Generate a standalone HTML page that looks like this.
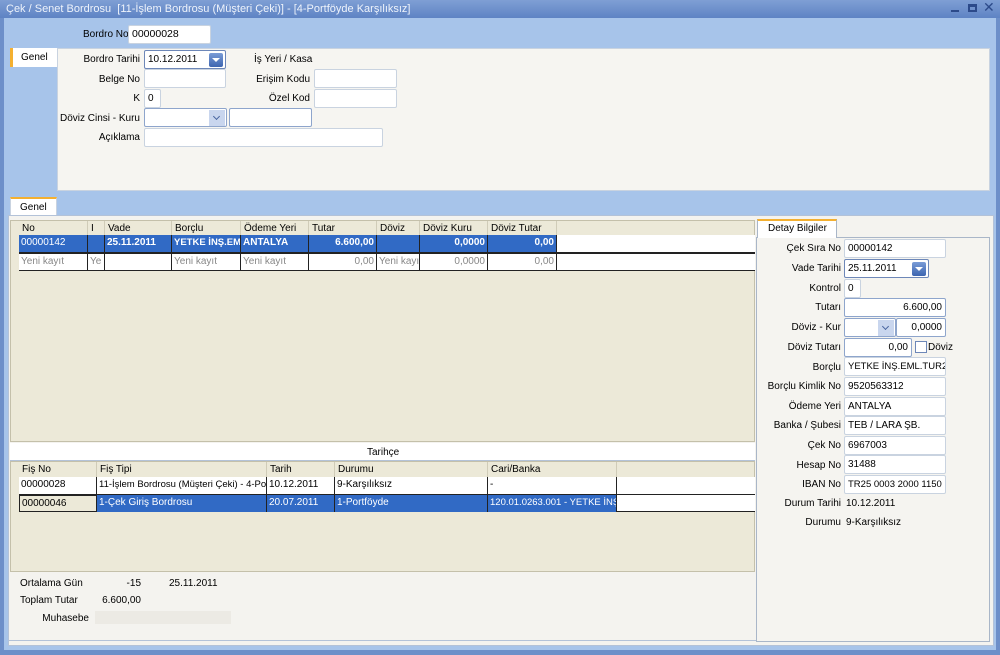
<!DOCTYPE html><html><head><meta charset="utf-8"><style>
*{box-sizing:border-box;margin:0;padding:0}
body{width:1000px;height:655px;overflow:hidden;background:#a7c4ea;font-family:"Liberation Sans","DejaVu Sans",sans-serif;font-size:10px;color:#000;position:relative}
.a{position:absolute}
.t{position:absolute;white-space:nowrap;line-height:14px}
.r{text-align:right}
.in{position:absolute;background:#fff;border:1px solid #c9d3e0;border-radius:2px;height:19px;line-height:17px;padding:0 3px;white-space:nowrap;overflow:hidden;font-size:10px}
.dd{position:absolute;width:14px;height:14px;background:linear-gradient(#7a9cd6,#3d65b0);border-radius:2px;top:2px;right:2px}
.dd:after{content:"";position:absolute;left:3px;top:5px;border:4px solid transparent;border-top:4px solid #fff;border-bottom:0}
.dl{position:absolute;width:16px;height:16px;background:#c9d6ee;top:1px;right:1px}
.dl:after{content:"";position:absolute;left:5px;top:4px;width:4px;height:4px;border-right:1.5px solid #4a66a0;border-bottom:1.5px solid #4a66a0;transform:rotate(45deg)}
.c{position:absolute;height:17px;line-height:16px;padding:0 2px;overflow:hidden;white-space:nowrap;border-right:1px solid #222}
.sel{background:#316ac5;color:#fff}
.g{color:#888}
.h{position:absolute;line-height:15px;padding-left:3px;border-right:1px solid #d0ccb8;white-space:nowrap}
</style></head><body>
<div class="a" style="left:0;top:0;width:1000px;height:18px;background:linear-gradient(#7f9fd4,#5e83c4)"></div>
<div class="t" style="left:6px;top:2px;color:#eef3fb;font-size:11px">Çek / Senet Bordrosu &nbsp;[11-İşlem Bordrosu (Müşteri Çeki)] - [4-Portföyde Karşılıksız]</div>
<div class="a" style="left:951px;top:10px;width:8px;height:2px;background:#2c4a8a"></div>
<div class="a" style="left:968px;top:4px;width:9px;height:8px;border:2px solid #2c4a8a;border-top-width:3px"></div>
<div class="t" style="left:983px;top:0px;color:#2c4a8a;font-size:14px;font-weight:bold">✕</div>
<div class="a" style="left:0;top:18px;width:4px;height:637px;background:#6d8fc9"></div>
<div class="a" style="left:996px;top:18px;width:4px;height:637px;background:#6d8fc9"></div>
<div class="a" style="left:0;top:650px;width:1000px;height:5px;background:#6d8fc9"></div>

<div class="t" style="left:83px;top:28px">Bordro No</div>
<div class="in" style="left:128px;top:25px;width:83px;font-size:10.5px">00000028</div>

<div class="a" style="left:10px;top:48px;width:47px;height:19px;background:#fff;border-left:3px solid #f4b030"></div>
<div class="t" style="left:21px;top:51px">Genel</div>
<div class="a" style="left:57px;top:48px;width:933px;height:143px;background:#f6f5f1;border:1px solid #c9d3e0"></div>
<div class="t r" style="left:60px;top:53px;width:80px">Bordro Tarihi</div>
<div class="in" style="left:144px;top:50px;width:82px;border-color:#6d87b8">10.12.2011<div class="dd"></div></div>
<div class="t" style="left:254px;top:53px">İş Yeri / Kasa</div>
<div class="t r" style="left:60px;top:73px;width:80px">Belge No</div>
<div class="in" style="left:144px;top:69px;width:82px"></div>
<div class="t r" style="left:230px;top:73px;width:80px">Erişim Kodu</div>
<div class="in" style="left:314px;top:69px;width:83px"></div>
<div class="t r" style="left:60px;top:92px;width:80px">K</div>
<div class="in" style="left:144px;top:89px;width:17px">0</div>
<div class="t r" style="left:230px;top:92px;width:80px">Özel Kod</div>
<div class="in" style="left:314px;top:89px;width:83px"></div>
<div class="t r" style="left:40px;top:112px;width:100px">Döviz Cinsi - Kuru</div>
<div class="in" style="left:144px;top:108px;width:83px;border-color:#8ea5cc"><div class="dl"></div></div>
<div class="in" style="left:229px;top:108px;width:83px;border-color:#8ea5cc"></div>
<div class="t r" style="left:60px;top:131px;width:80px">Açıklama</div>
<div class="in" style="left:144px;top:128px;width:239px"></div>

<div class="a" style="left:10px;top:197px;width:47px;height:19px;background:#fff;border:1px solid #c9d3e0;border-bottom:0;border-top:2px solid #f4b030"></div>
<div class="t" style="left:20px;top:201px">Genel</div>
<div class="a" style="left:8px;top:215px;width:986px;height:431px;background:#f4f3ef;border:1px solid #b3c2d8"></div>

<div class="a" style="left:10px;top:220px;width:745px;height:222px;background:#ece9d8;border:1px solid #c4c0aa"></div>
<div class="a" style="left:19px;top:235px;width:736px;height:36px;background:#fff;border-bottom:1px solid #222"></div>
<div class="h" style="left:19px;top:221px;width:69px">No</div>
<div class="h" style="left:88px;top:221px;width:17px">I</div>
<div class="h" style="left:105px;top:221px;width:67px">Vade</div>
<div class="h" style="left:172px;top:221px;width:69px">Borçlu</div>
<div class="h" style="left:241px;top:221px;width:68px">Ödeme Yeri</div>
<div class="h" style="left:309px;top:221px;width:68px">Tutar</div>
<div class="h" style="left:377px;top:221px;width:43px">Döviz</div>
<div class="h" style="left:420px;top:221px;width:68px">Döviz Kuru</div>
<div class="h" style="left:488px;top:221px;width:69px">Döviz Tutar</div>
<div class="c sel" style="left:19px;top:235px;width:69px">00000142</div>
<div class="c sel" style="left:88px;top:235px;width:17px"></div>
<div class="c sel" style="left:105px;top:235px;width:67px;font-weight:bold">25.11.2011</div>
<div class="c sel" style="left:172px;top:235px;width:69px;font-weight:bold;font-size:9.5px">YETKE İNŞ.EMI</div>
<div class="c sel" style="left:241px;top:235px;width:68px;font-weight:bold">ANTALYA</div>
<div class="c sel r" style="left:309px;top:235px;width:68px;font-weight:bold">6.600,00</div>
<div class="c sel" style="left:377px;top:235px;width:43px"></div>
<div class="c sel r" style="left:420px;top:235px;width:68px;font-weight:bold">0,0000</div>
<div class="c sel r" style="left:488px;top:235px;width:69px;font-weight:bold">0,00</div>
<div class="a" style="left:19px;top:252px;width:736px;height:2px;background:#222"></div>
<div class="c g" style="left:19px;top:254px;width:69px">Yeni kayıt</div>
<div class="c g" style="left:88px;top:254px;width:17px">Ye</div>
<div class="c g" style="left:105px;top:254px;width:67px"></div>
<div class="c g" style="left:172px;top:254px;width:69px">Yeni kayıt</div>
<div class="c g" style="left:241px;top:254px;width:68px">Yeni kayıt</div>
<div class="c g r" style="left:309px;top:254px;width:68px">0,00</div>
<div class="c g" style="left:377px;top:254px;width:43px">Yeni kayıt</div>
<div class="c g r" style="left:420px;top:254px;width:68px">0,0000</div>
<div class="c g r" style="left:488px;top:254px;width:69px">0,00</div>

<div class="a" style="left:10px;top:443px;width:745px;height:18px;background:#fff;border-bottom:1px solid #b3c2d8"></div>
<div class="t" style="left:367px;top:446px">Tarihçe</div>
<div class="a" style="left:10px;top:461px;width:745px;height:111px;background:#ece9d8;border:1px solid #c4c0aa"></div>
<div class="a" style="left:19px;top:477px;width:736px;height:35px;background:#fff;border-bottom:1px solid #222"></div>
<div class="h" style="left:19px;top:462px;width:78px">Fiş No</div>
<div class="h" style="left:97px;top:462px;width:170px">Fiş Tipi</div>
<div class="h" style="left:267px;top:462px;width:68px">Tarih</div>
<div class="h" style="left:335px;top:462px;width:153px">Durumu</div>
<div class="h" style="left:488px;top:462px;width:129px">Cari/Banka</div>
<div class="c" style="left:19px;top:477px;width:78px">00000028</div>
<div class="c" style="left:97px;top:477px;width:170px;font-size:9.5px">11-İşlem Bordrosu (Müşteri Çeki) - 4-Po</div>
<div class="c" style="left:267px;top:477px;width:68px">10.12.2011</div>
<div class="c" style="left:335px;top:477px;width:153px">9-Karşılıksız</div>
<div class="c" style="left:488px;top:477px;width:129px">-</div>
<div class="a" style="left:19px;top:494px;width:736px;height:1px;background:#222"></div>
<div class="c" style="left:19px;top:495px;width:78px;background:#ece9d8;border:1px solid #222">00000046</div>
<div class="c sel" style="left:97px;top:495px;width:170px">1-Çek Giriş Bordrosu</div>
<div class="c sel" style="left:267px;top:495px;width:68px">20.07.2011</div>
<div class="c sel" style="left:335px;top:495px;width:153px">1-Portföyde</div>
<div class="c sel" style="left:488px;top:495px;width:129px;font-size:9.5px">120.01.0263.001 - YETKE İNŞ</div>

<div class="t r" style="left:20px;top:577px;width:57px">Ortalama Gün</div>
<div class="t r" style="left:120px;top:577px;width:21px">-15</div>
<div class="t" style="left:169px;top:577px">25.11.2011</div>
<div class="t r" style="left:20px;top:594px;width:57px">Toplam Tutar</div>
<div class="t r" style="left:100px;top:594px;width:41px">6.600,00</div>
<div class="t r" style="left:20px;top:612px;width:69px">Muhasebe</div>
<div class="a" style="left:95px;top:611px;width:136px;height:13px;background:#eceae4"></div>
<div class="a" style="left:8px;top:640px;width:748px;height:1px;background:#b3c2d8"></div>

<div class="a" style="left:756px;top:237px;width:234px;height:405px;background:#f5f4f0;border:1px solid #a9b6c8"></div>
<div class="a" style="left:757px;top:219px;width:80px;height:19px;background:#fff;border:1px solid #a9b6c8;border-bottom:0;border-top:2px solid #f4b030"></div>
<div class="t" style="left:768px;top:222px">Detay Bilgiler</div>
<div class="t r" style="left:755px;top:242px;width:86px">Çek Sıra No</div><div class="in" style="left:844px;top:239px;width:102px">00000142</div>
<div class="t r" style="left:755px;top:262px;width:86px">Vade Tarihi</div><div class="in" style="left:844px;top:259px;width:85px;border-color:#6d87b8">25.11.2011<div class="dd"></div></div>
<div class="t r" style="left:755px;top:282px;width:86px">Kontrol</div><div class="in" style="left:844px;top:279px;width:17px">0</div>
<div class="t r" style="left:755px;top:301px;width:86px">Tutarı</div><div class="in r" style="left:844px;top:298px;width:102px;border-color:#8ea5cc">6.600,00</div>
<div class="t r" style="left:755px;top:321px;width:86px">Döviz - Kur</div><div class="in" style="left:844px;top:318px;width:52px;border-color:#8ea5cc"><div class="dl"></div></div><div class="in r" style="left:896px;top:318px;width:50px;border-color:#8ea5cc">0,0000</div>
<div class="t r" style="left:755px;top:341px;width:86px">Döviz Tutarı</div><div class="in r" style="left:844px;top:338px;width:68px;border-color:#8ea5cc">0,00</div>
<div class="a" style="left:915px;top:341px;width:12px;height:12px;border:1px solid #6d87b8;background:#fff"></div><div class="t" style="left:928px;top:341px">Döviz</div>
<div class="t r" style="left:755px;top:361px;width:86px">Borçlu</div><div class="in" style="left:844px;top:357px;width:102px;font-size:9.5px">YETKE İNŞ.EML.TUR2</div>
<div class="t r" style="left:755px;top:380px;width:86px">Borçlu Kimlik No</div><div class="in" style="left:844px;top:377px;width:102px">9520563312</div>
<div class="t r" style="left:755px;top:400px;width:86px">Ödeme Yeri</div><div class="in" style="left:844px;top:397px;width:102px">ANTALYA</div>
<div class="t r" style="left:755px;top:419px;width:86px">Banka / Şubesi</div><div class="in" style="left:844px;top:416px;width:102px">TEB / LARA ŞB.</div>
<div class="t r" style="left:755px;top:439px;width:86px">Çek No</div><div class="in" style="left:844px;top:436px;width:102px">6967003</div>
<div class="t r" style="left:755px;top:459px;width:86px">Hesap No</div><div class="in" style="left:844px;top:455px;width:102px">31488</div>
<div class="t r" style="left:755px;top:478px;width:86px">IBAN No</div><div class="in" style="left:844px;top:475px;width:102px;font-size:9.5px">TR25 0003 2000 1150</div>
<div class="t r" style="left:755px;top:497px;width:86px">Durum Tarihi</div><div class="t" style="left:846px;top:497px">10.12.2011</div>
<div class="t r" style="left:755px;top:516px;width:86px">Durumu</div><div class="t" style="left:846px;top:516px">9-Karşılıksız</div>
</body></html>
